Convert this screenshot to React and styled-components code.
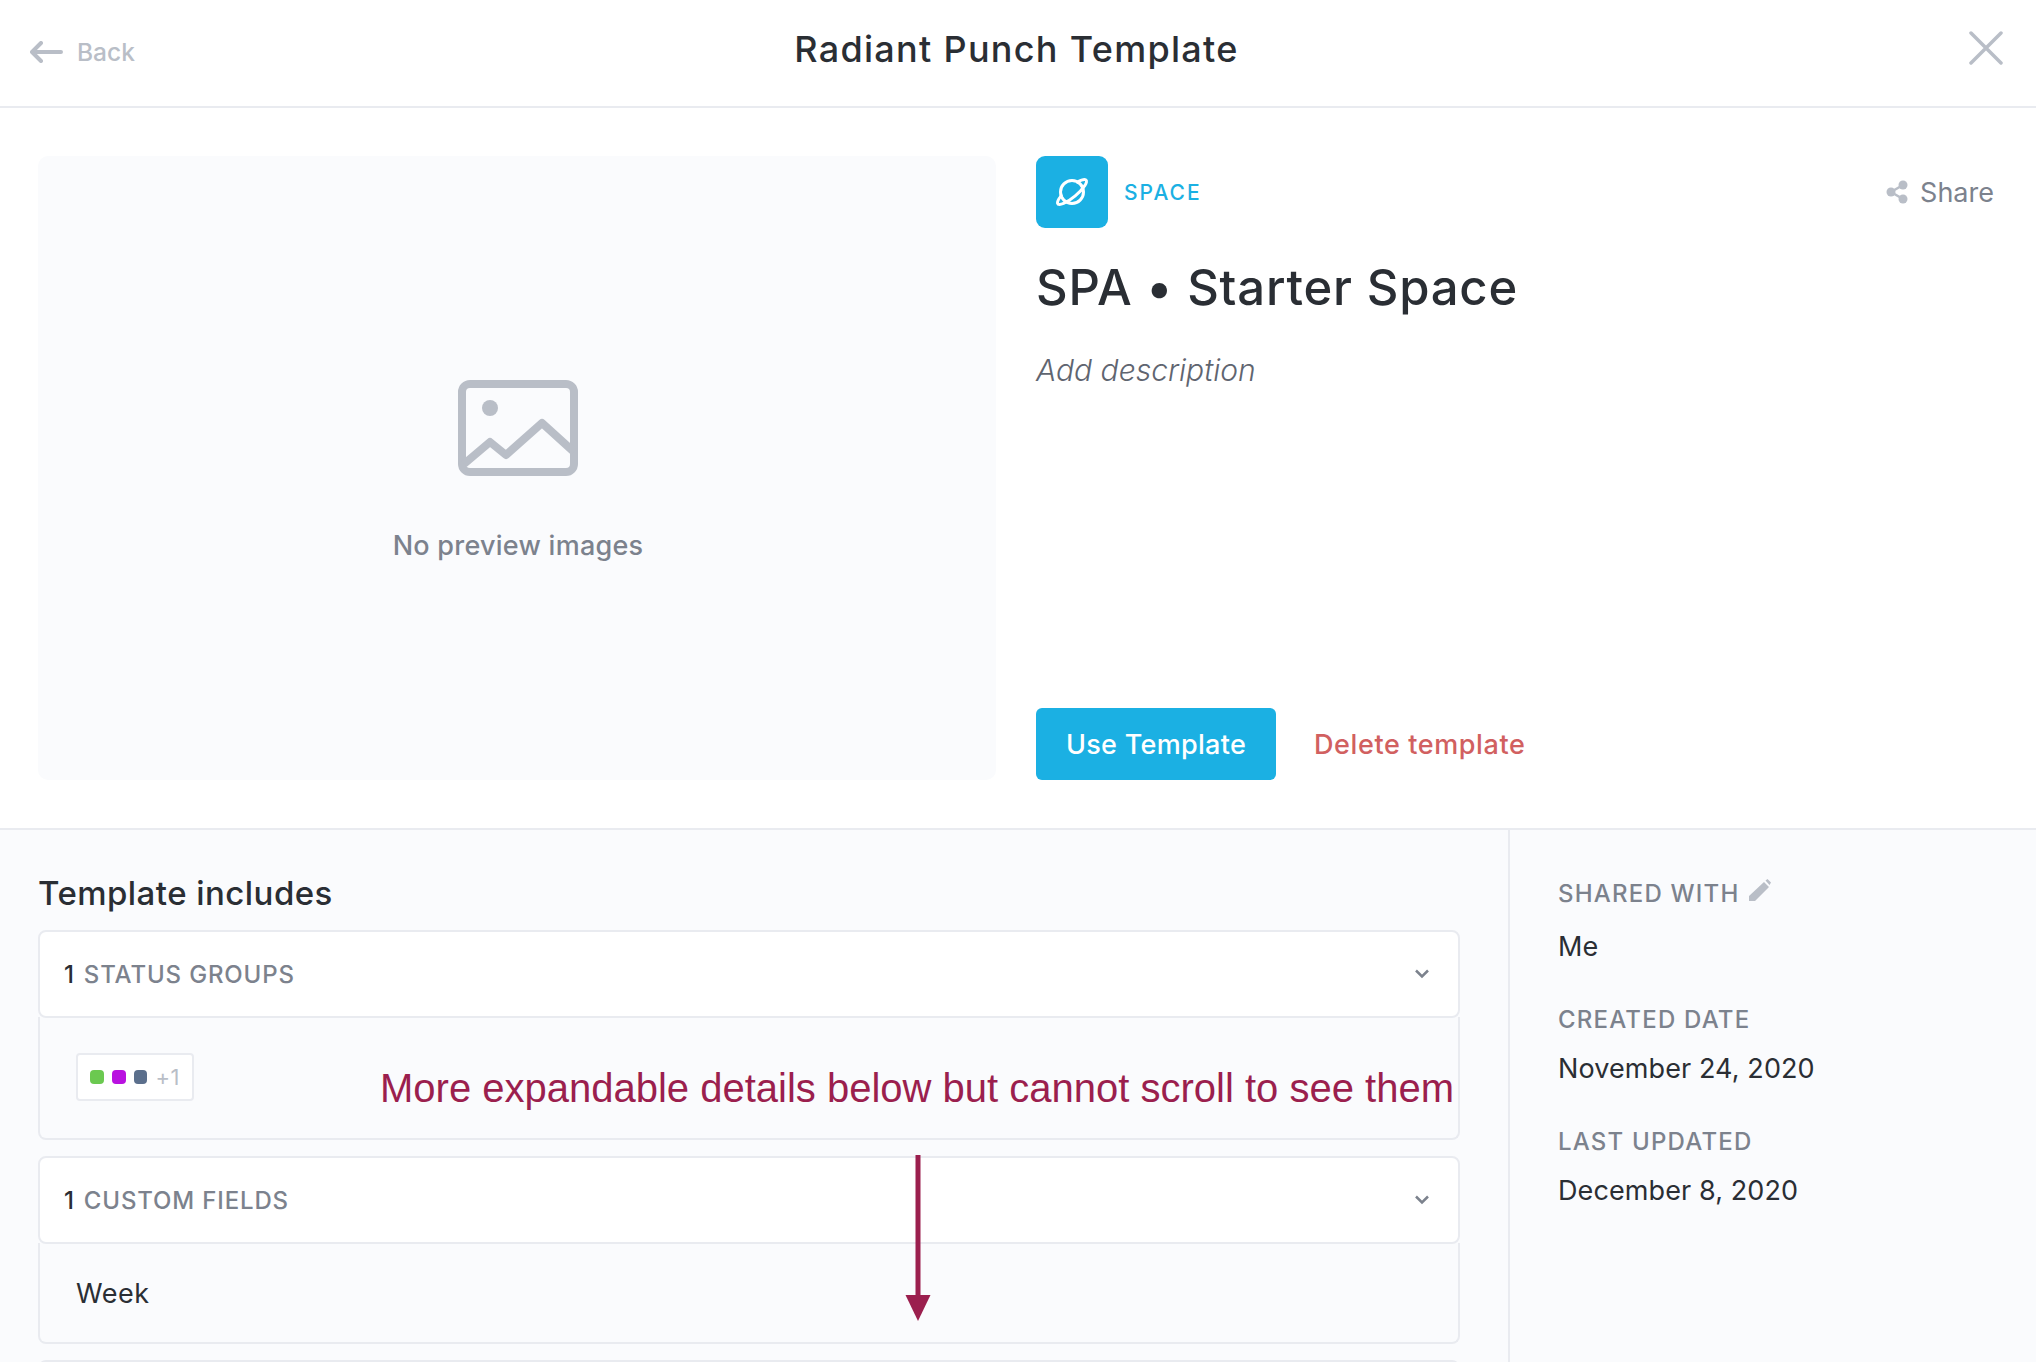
import React from "react";
import styled, { createGlobalStyle } from "styled-components";

const Global = createGlobalStyle`
  html, body { margin: 0; padding: 0; background: #fff; overflow: hidden; }
  * { box-sizing: border-box; }
  body { font-family: Inter, "Open Sans", sans-serif; color: #2a2e34; }
`;

const Page = styled.div`
  position: relative;
  width: 2036px;
  height: 1362px;
  overflow: hidden;
  display: flex;
  flex-direction: column;
`;

const Header = styled.header`
  flex: none;
  height: 108px;
  border-bottom: 2px solid #e9ebf0;
  display: grid;
  grid-template-columns: 1fr auto 1fr;
  align-items: center;
  padding: 0 33px 8px 30px;
`;

const Back = styled.div`
  display: flex;
  align-items: center;
  gap: 14px;
  margin-top: 5px;
  font-size: 24.5px;
  font-weight: 500;
  color: #b9bec7;
`;

const Title = styled.h1`
  margin: 0;
  font-size: 36px;
  font-weight: 500;
  letter-spacing: 1.3px;
  color: #2a2e34;
`;

const Close = styled.div`
  justify-self: end;
  display: flex;
  margin-top: -2px;
`;

const Top = styled.section`
  flex: none;
  height: 722px;
  padding: 48px 42px 48px 38px;
  display: flex;
  gap: 40px;
  border-bottom: 2px solid #e9ebf0;
`;

const Preview = styled.div`
  flex: none;
  width: 958px;
  height: 624px;
  border-radius: 10px;
  background: #fafbfd;
  display: flex;
  flex-direction: column;
  align-items: center;
  padding: 224px 0 0 2px;
`;

const PreviewText = styled.div`
  margin-top: 53px;
  font-size: 27px;
  font-weight: 500;
  letter-spacing: 0.25px;
  color: #7c828d;
`;

const Info = styled.div`
  flex: 1;
  display: flex;
  flex-direction: column;
  height: 624px;
`;

const TypeRow = styled.div`
  display: flex;
  align-items: center;
  gap: 16px;
`;

const SpaceBadge = styled.div`
  width: 72px;
  height: 72px;
  border-radius: 9px;
  background: #1bb0e3;
  display: flex;
  align-items: center;
  justify-content: center;
`;

const TypeLabel = styled.span`
  font-size: 21px;
  font-weight: 500;
  letter-spacing: 2px;
  color: #1bb0e3;
`;

const Share = styled.div`
  margin-left: auto;
  display: flex;
  align-items: center;
  gap: 12px;
  font-size: 27px;
  color: #7c828d;
`;

const Name = styled.h2`
  margin: 30px 0 0;
  font-size: 49px;
  line-height: 60px;
  font-weight: 500;
  letter-spacing: 0.8px;
  color: #2a2e34;
`;

const Description = styled.div`
  margin-top: 34px;
  font-size: 30px;
  font-style: italic;
  font-weight: 300;
  color: #5f6570;
`;

const Actions = styled.div`
  margin-top: auto;
  display: flex;
  align-items: center;
  gap: 38px;
`;

const Primary = styled.button`
  width: 240px;
  height: 72px;
  border: 0;
  border-radius: 6px;
  background: #1bb0e3;
  color: #fff;
  font: 500 27px Inter, sans-serif;
  letter-spacing: 0.3px;
`;

const Danger = styled.span`
  font-size: 27px;
  font-weight: 500;
  letter-spacing: 0.6px;
  color: #d16060;
`;

const Bottom = styled.section`
  flex: 1;
  min-height: 0;
  background: #fafbfd;
  display: flex;
`;

const Includes = styled.div`
  flex: none;
  width: 1510px;
  padding: 42px 48px 0 38px;
  border-right: 2px solid #e9ebf0;
`;

const IncludesTitle = styled.h3`
  margin: 0 0 16px;
  font-size: 33px;
  line-height: 42px;
  font-weight: 500;
  letter-spacing: 0.45px;
  color: #2a2e34;
`;

const Group = styled.div`
  margin-bottom: 16px;
`;

const GroupHead = styled.div`
  height: 88px;
  border: 2px solid #e9ebf0;
  border-radius: 8px;
  background: #fff;
  display: flex;
  align-items: center;
  padding: 0 29px 0 24px;
  font-size: 24px;
  font-weight: 500;
  letter-spacing: 0.85px;
  color: #7c828d;
`;

const Count = styled.span`
  color: #2a2e34;
  margin-right: 9px;
`;

const Chevron = styled.svg`
  margin-left: auto;
`;

const GroupBody = styled.div`
  height: ${(p) => p.$h}px;
  margin-top: -1px;
  border: 2px solid #e9ebf0;
  border-top: 0;
  border-radius: 0 0 8px 8px;
  display: flex;
  align-items: center;
  padding: 2px 36px 0;
  font-size: 27px;
  letter-spacing: 0.5px;
  color: #2a2e34;
`;

const Statuses = styled.div`
  display: flex;
  align-items: center;
  gap: 8px;
  height: 48px;
  width: 118px;
  padding: 0 12px;
  margin-top: -3px;
  border: 2px solid #e9ebf0;
  border-radius: 4px;
  background: #fff;
  font-size: 22px;
  color: #b9bec7;
`;

const Dot = styled.i`
  width: 14px;
  height: 14px;
  border-radius: 4px;
  background: ${(p) => p.$c};
`;

const Side = styled.aside`
  flex: 1;
  padding: 49px 0 0 48px;
`;

const Label = styled.div`
  display: flex;
  align-items: flex-start;
  gap: 10px;
  padding-bottom: ${(p) => (p.$tall ? 4 : 0)}px;
  font-size: 24px;
  line-height: 30px;
  font-weight: 500;
  letter-spacing: 1.2px;
  color: #7c828d;
`;

const Value = styled.div`
  margin: 17px 0 41px;
  font-size: 27px;
  line-height: 34px;
  letter-spacing: 0.1px;
  color: #2a2e34;
`;

const Note = styled.div`
  position: absolute;
  left: 380px;
  top: 1063px;
  font-family: "Liberation Sans", Arial, sans-serif;
  font-size: 40px;
  line-height: 50px;
  white-space: nowrap;
  color: #9b1f4e;
`;

const NoteArrow = styled.svg`
  position: absolute;
  left: 904px;
  top: 1155px;
`;

const Planet = () => (
  <svg width="44" height="44" viewBox="0 0 44 44" fill="none" stroke="#fff" strokeWidth="3" strokeLinecap="round">
    <circle cx="22" cy="22" r="11.500" />
    <path d="M-10.500 -4.100A18.500 5 0 1 0 10.500 -4.100" transform="translate(22 22) rotate(-40)" />
  </svg>
);

const ImageIcon = () => (
  <svg width="120" height="96" viewBox="0 0 120 96" fill="none" stroke="#b9bec7" strokeWidth="8" strokeLinejoin="round">
    <rect x="4" y="4" width="112" height="88" rx="8" />
    <circle cx="32" cy="28" r="8" fill="#b9bec7" stroke="none" />
    <path d="M6 84l26-22 16 13 36-32 32 29" />
  </svg>
);

const ChevronDown = () => (
  <Chevron width="14" height="10" viewBox="0 0 14 10" fill="none" stroke="#7c828d" strokeWidth="2.500">
    <path d="M1 1.500l6 6 6-6" />
  </Chevron>
);

export default function App() {
  return (
    <Page>
      <Global />
      <Header>
        <Back>
          <svg width="33" height="22" viewBox="0 0 33 22" fill="none" stroke="#b9bec7" strokeWidth="4" strokeLinecap="round" strokeLinejoin="round">
            <path d="M31 11H3M11 2l-9 9 9 9" />
          </svg>
          Back
        </Back>
        <Title>Radiant Punch Template</Title>
        <Close>
          <svg width="34" height="34" viewBox="0 0 34 34" stroke="#b9bec7" strokeWidth="3.500" strokeLinecap="round">
            <path d="M2 2l30 30M32 2L2 32" />
          </svg>
        </Close>
      </Header>

      <Top>
        <Preview>
          <ImageIcon />
          <PreviewText>No preview images</PreviewText>
        </Preview>
        <Info>
          <TypeRow>
            <SpaceBadge><Planet /></SpaceBadge>
            <TypeLabel>SPACE</TypeLabel>
            <Share>
              <svg width="22" height="24" viewBox="0 0 22 24" fill="#b9bec7">
                <circle cx="17" cy="5" r="4.500" />
                <circle cx="5" cy="12" r="4.500" />
                <circle cx="17" cy="19" r="4.500" />
                <path d="M17 5L5 12l12 7" fill="none" stroke="#b9bec7" strokeWidth="2.500" />
              </svg>
              Share
            </Share>
          </TypeRow>
          <Name>SPA • Starter Space</Name>
          <Description>Add description</Description>
          <Actions>
            <Primary>Use Template</Primary>
            <Danger>Delete template</Danger>
          </Actions>
        </Info>
      </Top>

      <Bottom>
        <Includes>
          <IncludesTitle>Template includes</IncludesTitle>
          <Group>
            <GroupHead><Count>1</Count>STATUS GROUPS<ChevronDown /></GroupHead>
            <GroupBody $h={123}>
              <Statuses>
                <Dot $c="#6bc950" />
                <Dot $c="#b911e0" />
                <Dot $c="#5b6f8c" />
                +1
              </Statuses>
            </GroupBody>
          </Group>
          <Group>
            <GroupHead><Count>1</Count>CUSTOM FIELDS<ChevronDown /></GroupHead>
            <GroupBody $h={101}>Week</GroupBody>
          </Group>
          <GroupHead />
        </Includes>
        <Side>
          <Label $tall>
            SHARED WITH
            <svg width="22" height="23" viewBox="0 0 22 23" fill="#b9bec7">
              <path d="M15 3l5 5L6 22H0v-5zM16.500 1.500l2-1.500 3.500 3.500-1.500 2.500z" />
            </svg>
          </Label>
          <Value>Me</Value>
          <Label>CREATED DATE</Label>
          <Value>November 24, 2020</Value>
          <Label>LAST UPDATED</Label>
          <Value>December 8, 2020</Value>
        </Side>
      </Bottom>

      <Note>More expandable details below but cannot scroll to see them</Note>
      <NoteArrow width="28" height="166" viewBox="0 0 28 166" fill="#9b1f4e">
        <rect x="11.500" y="0" width="5" height="142" />
        <path d="M1.500 140h25l-12.500 26z" />
      </NoteArrow>
    </Page>
  );
}
